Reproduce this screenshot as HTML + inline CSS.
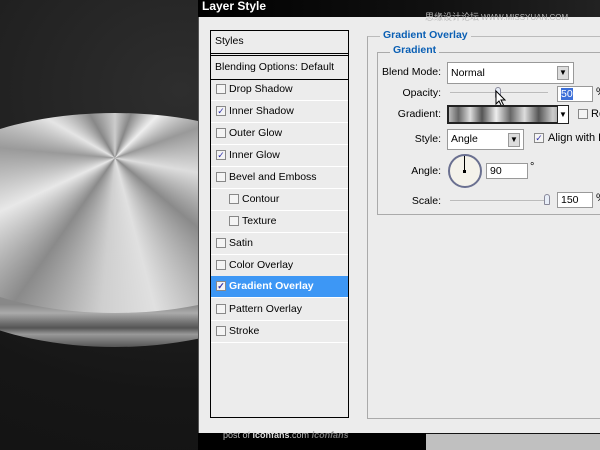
<!DOCTYPE html>
<html><head><meta charset="utf-8"><style>
*{margin:0;padding:0;box-sizing:border-box}
body{width:600px;height:450px;overflow:hidden;position:relative;background:#141414;font-family:"Liberation Sans",sans-serif;font-size:11px;color:#000}
.a{position:absolute}
.bg{left:0;top:0;width:600px;height:450px;background:radial-gradient(ellipse at 30% 20%,#2e2e2e,#161616 60%,#111)}
.rim{left:-100px;top:135px;width:430px;height:212px;border-radius:50%;background:linear-gradient(#888 0,#888 80%,#aaa 84%,#777 88%,#555 91%,#999 94%,#777 97%,#555)}
.face{left:-97px;top:113px;width:424px;height:200px;border-radius:50%;background:conic-gradient(from 0deg at 212px 45px,#ccc,#888 20deg,#eee 45deg,#999 70deg,#ddd 100deg,#8a8a8a 130deg,#e0e0e0 165deg,#cfcfcf 185deg,#8a8a8a 215deg,#e8e8e8 245deg,#9a9a9a 275deg,#e5e5e5 300deg,#888 330deg,#ccc)}
.dlg{left:198px;top:16px;width:410px;height:417px;background:#ececec;border-left:1px solid #555}
.title{left:198px;top:0;width:402px;height:17px;background:linear-gradient(90deg,#000,#111 60%,#222);color:#fff;font-weight:bold;font-size:12px;padding:0 0 0 4px;line-height:12px}
.list{left:210px;top:30px;width:139px;height:388px;border:1px solid #000;background:#ececec}
.row{position:absolute;left:0;width:137px;height:22px;border-bottom:1px solid #fff;line-height:21px;font-size:10.5px}
.cb{position:absolute;width:10px;height:10px;border:1px solid #888;background:#f4f4f4;top:5px;font-size:9px;line-height:8px;color:#33a;text-align:center}
.gb{border:1px solid #aaa}
.lbl{position:absolute;text-align:right;width:80px;font-size:10.5px;white-space:nowrap}
.blue{color:#0a5fb4;font-weight:bold;font-size:10.5px;background:#ececec;padding:0 3px}
.inp{position:absolute;background:#fff;border:1px solid #999;font-size:10.5px;padding-left:3px;line-height:14px}
.slider{position:absolute;height:2px;background:#bbb;border-bottom:1px solid #eee}
.thumb{position:absolute;width:6px;height:11px;border:1px solid #889;border-radius:3px 3px 1px 1px;background:#e8eef8}
.dd{position:absolute;width:12px;background:#ddd;border:1px solid #999}
</style></head><body>
<div class="a bg"></div>
<div class="a rim"></div>
<div class="a face"></div>
<div class="a dlg"></div>
<div class="a title">Layer Style</div>
<div class="a" style="left:425px;top:10px;color:#bbb;font-size:9px;font-family:'Noto Sans CJK SC',sans-serif">思缘设计论坛 <span style="font-family:'Liberation Sans';font-size:8px">WWW.MISSYUAN.COM</span></div>
<div class="a list">
<div class="row" style="top:0;height:25px;border-bottom:3px double #000;padding-left:4px;line-height:21px">Styles</div>
<div class="row" style="top:26px;height:23px;border-bottom:1px solid #000;padding-left:4px">Blending Options: Default</div>
<div class="row" style="top:48px"><span class="cb" style="left:5px"></span><span style="padding-left:18px">Drop Shadow</span></div>
<div class="row" style="top:70px"><span class="cb" style="left:5px">✓</span><span style="padding-left:18px">Inner Shadow</span></div>
<div class="row" style="top:92px"><span class="cb" style="left:5px"></span><span style="padding-left:18px">Outer Glow</span></div>
<div class="row" style="top:114px"><span class="cb" style="left:5px">✓</span><span style="padding-left:18px">Inner Glow</span></div>
<div class="row" style="top:136px"><span class="cb" style="left:5px"></span><span style="padding-left:18px">Bevel and Emboss</span></div>
<div class="row" style="top:158px"><span class="cb" style="left:18px"></span><span style="padding-left:31px">Contour</span></div>
<div class="row" style="top:180px"><span class="cb" style="left:18px"></span><span style="padding-left:31px">Texture</span></div>
<div class="row" style="top:202px"><span class="cb" style="left:5px"></span><span style="padding-left:18px">Satin</span></div>
<div class="row" style="top:224px"><span class="cb" style="left:5px"></span><span style="padding-left:18px">Color Overlay</span></div>
<div class="row" style="top:245px;background:#3d97f5;color:#fff;font-weight:bold"><span class="cb" style="left:5px">✓</span><span style="padding-left:18px">Gradient Overlay</span></div>
<div class="row" style="top:268px"><span class="cb" style="left:5px"></span><span style="padding-left:18px">Pattern Overlay</span></div>
<div class="row" style="top:290px"><span class="cb" style="left:5px"></span><span style="padding-left:18px">Stroke</span></div>
</div>
<div class="a gb" style="left:367px;top:36px;width:250px;height:383px;border-top-color:#bbb"></div>
<div class="a blue" style="left:380px;top:29px">Gradient Overlay</div>
<div class="a gb" style="left:377px;top:52px;width:240px;height:163px"></div>
<div class="a blue" style="left:390px;top:44px">Gradient</div>
<div class="lbl" style="left:361px;top:66px">Blend Mode:</div>
<div class="inp" style="left:447px;top:62px;width:127px;height:22px;line-height:20px">Normal</div>
<div class="dd" style="left:557px;top:66px;height:14px;font-size:8px;text-align:center;line-height:12px">▼</div>
<div class="lbl" style="left:361px;top:87px">Opacity:</div>
<div class="slider" style="left:450px;top:92px;width:98px"></div>
<div class="thumb" style="left:495px;top:87px"></div>
<div class="inp" style="left:557px;top:86px;width:36px;height:16px"><span style="background:#3d6fd8;color:#fff">50</span></div>
<div class="a" style="left:596px;top:86px">%</div>
<svg class="a" style="left:495px;top:90px" width="12" height="18"><path d="M1 1L1 14L4 11L7 17L9 16L6 10L10 10Z" fill="#fff" stroke="#000"/></svg>
<div class="lbl" style="left:361px;top:108px">Gradient:</div>
<div class="a" style="left:447px;top:105px;width:122px;height:19px;border:2px solid #222;background:linear-gradient(90deg,#bbb,#666 8%,#ddd 18%,#555 28%,#eee 40%,#666 52%,#ddd 64%,#555 76%,#ccc 88%,#777)"></div>
<div class="a" style="left:557px;top:105px;width:12px;height:19px;background:#fff;border:1px solid #222;font-size:8px;text-align:center;line-height:17px">▼</div>
<div class="cb" style="left:578px;top:109px"></div><div class="a" style="left:591px;top:108px">Re</div>
<div class="lbl" style="left:361px;top:133px">Style:</div>
<div class="inp" style="left:447px;top:129px;width:77px;height:21px;line-height:19px">Angle</div>
<div class="dd" style="left:508px;top:133px;height:14px;font-size:8px;text-align:center;line-height:12px">▼</div>
<div class="cb" style="left:534px;top:133px">✓</div><div class="a" style="left:548px;top:132px;white-space:nowrap">Align with L</div>
<div class="lbl" style="left:361px;top:165px">Angle:</div>
<div class="a" style="left:448px;top:154px;width:34px;height:34px;border-radius:50%;border:2px solid #6a7090;background:#f4f2ea"></div>
<div class="a" style="left:464px;top:156px;width:1px;height:15px;background:#000"></div>
<div class="a" style="left:463px;top:170px;width:3px;height:3px;background:#000"></div>
<div class="inp" style="left:486px;top:163px;width:42px;height:16px">90</div>
<div class="a" style="left:530px;top:161px">°</div>
<div class="lbl" style="left:361px;top:195px">Scale:</div>
<div class="slider" style="left:450px;top:200px;width:98px"></div>
<div class="thumb" style="left:544px;top:194px"></div>
<div class="inp" style="left:557px;top:192px;width:36px;height:16px">150</div>
<div class="a" style="left:596px;top:192px">%</div>
<div class="a" style="left:198px;top:433px;width:228px;height:17px;background:#000"></div>
<div class="a" style="left:426px;top:434px;width:174px;height:16px;background:#c0c0c0"></div>
<div class="a" style="left:223px;top:430px;color:#bbb;font-size:9px">post of <b style="color:#ddd">iconfans</b>.com <i style="color:#777;font-weight:bold">iconfans</i></div>
</body></html>
